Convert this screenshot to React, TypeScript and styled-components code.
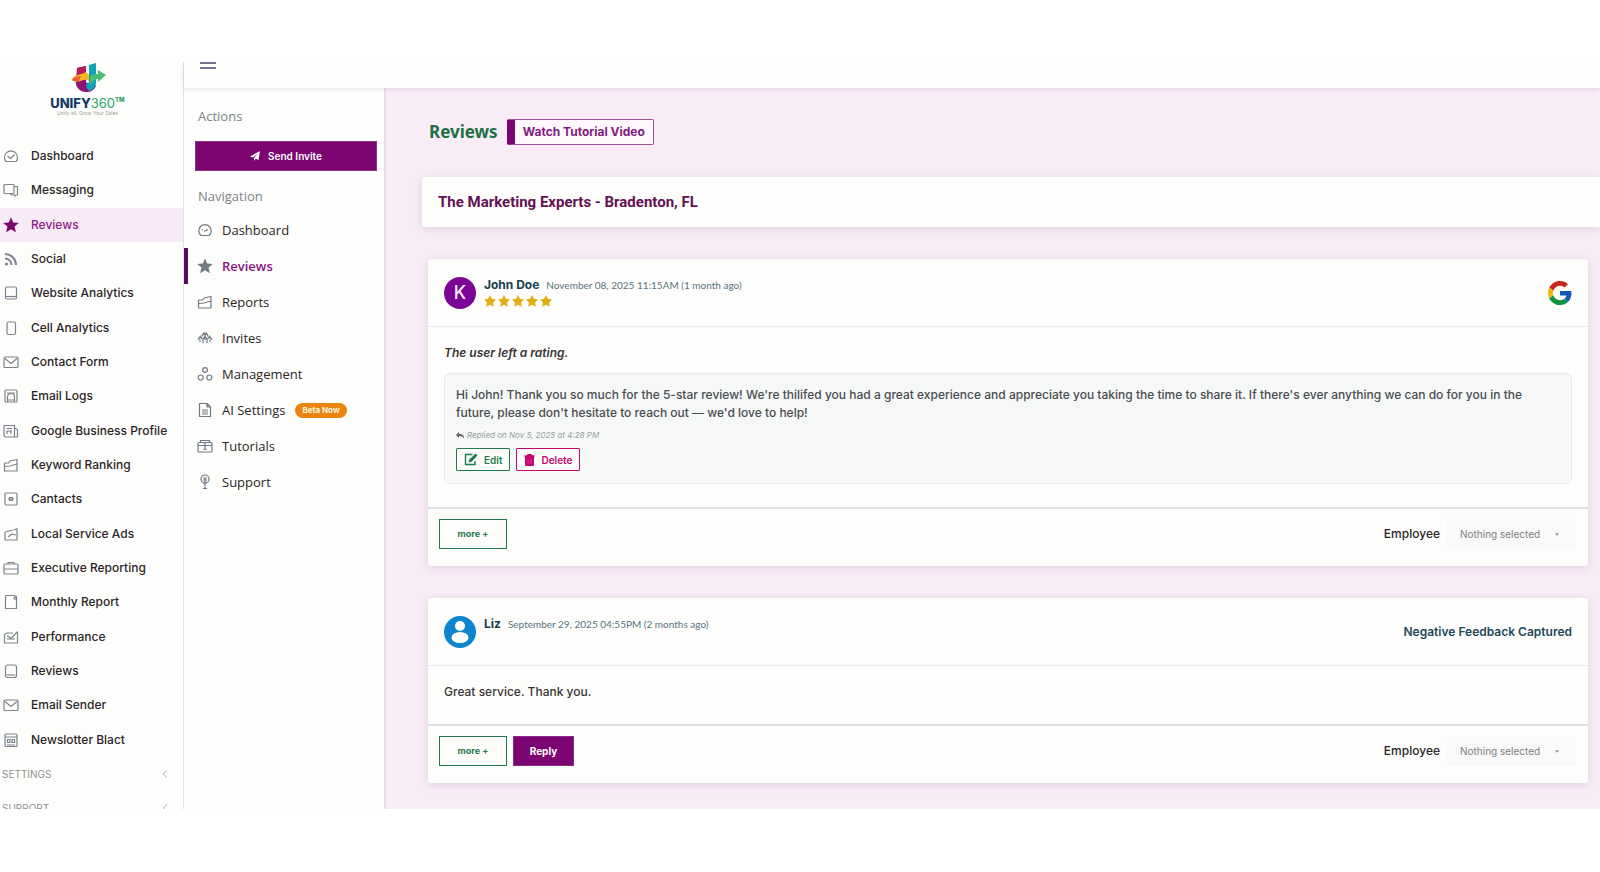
import React from "react";
import styled, { createGlobalStyle, css } from "styled-components";

const color = {
  paper: "#fdfefb",
  line: "#e3e2e6",
  wash: "#f8ecf6",
  purple: "#7b0472",
  green: "#1f7a4d",
  ink: "#2b2527",
  slate: "#21485a",
  muted: "#7b8488",
};
const sans = `Inter, "Liberation Sans", sans-serif`;
const noto = `"Noto Sans", "Open Sans", sans-serif`;
const open = `"Open Sans", "Noto Sans", sans-serif`;

const Global = createGlobalStyle`
  *, *::before, *::after { box-sizing: border-box; }
  body { margin: 0; background: #fff; font-family: ${sans}; color: ${color.ink}; }
  button, select { font-family: inherit; margin: 0; }
  a { color: inherit; text-decoration: none; }
  ul { list-style: none; margin: 0; padding: 0; }
  h1, h2, h3, p { margin: 0; }
`;

const Page = styled.div`
  height: 100vh;
  padding: 62px 0 63px;
`;
const Shell = styled.div`
  display: grid;
  grid-template-columns: 184px minmax(0, 1fr);
  height: 100%;
  overflow: hidden;
  background: ${color.paper};
`;

/* primary sidebar */
const Sidebar = styled.aside`
  display: flex;
  flex-direction: column;
  min-height: 0;
  border-right: 1px solid ${color.line};
`;
const Brand = styled.a`
  display: flex;
  flex-direction: column;
  align-items: center;
  height: 77px;
  flex: none;
  padding-right: 8px;
`;
const BrandName = styled.span`
  display: flex;
  font: 800 13px/14px ${sans};
  color: #143a6b;
`;
const BrandNumber = styled.span`
  font-weight: 400;
  color: #2fa36b;
`;
const BrandMark = styled.sup`
  font-size: 6px;
  line-height: 8px;
  color: #2fa36b;
`;
const BrandTag = styled.span`
  font: 400 5px/6px ${sans};
  color: #a59a92;
`;
const MainMenu = styled.ul`
  display: grid;
  grid-auto-rows: 1fr;
  flex: 1;
  min-height: 0;
`;
const MainLink = styled.a<{ $active?: boolean }>`
  display: grid;
  grid-template-columns: 16px 1fr;
  column-gap: 12px;
  align-items: center;
  height: 100%;
  padding-left: 3px;
  font: 500 12px/16px ${sans};
  white-space: nowrap;
  color: ${(p) => (p.$active ? "#8d1a86" : color.ink)};
  background: ${(p) => (p.$active ? "#f8eaf6" : "transparent")};
  svg { color: ${(p) => (p.$active ? color.purple : "#7d828c")}; }
`;
const MenuFooter = styled.div`
  height: 52px;
  flex: none;
  overflow: hidden;
`;
const GroupButton = styled.button`
  display: flex;
  align-items: center;
  justify-content: space-between;
  width: 100%;
  height: 34px;
  padding: 0 15px 0 2px;
  border: 0;
  background: none;
  font-size: 10px;
  line-height: 14px;
  color: #8d9191;
`;

/* right side */
const Stage = styled.div`
  display: flex;
  flex-direction: column;
  min-width: 0;
  min-height: 0;
`;
const TopBar = styled.header`
  position: relative;
  flex: none;
  height: 26px;
  padding-left: 16px;
  background: ${color.paper};
  box-shadow: 0 1px 5px rgba(90, 60, 100, 0.14);
`;
const MenuToggle = styled.button`
  display: block;
  height: 8px;
  padding: 0;
  border: 0;
  background: none;
  svg { display: block; }
`;
const Columns = styled.div`
  display: grid;
  grid-template-columns: 202px minmax(0, 1fr);
  flex: 1;
  min-height: 0;
`;
const SubNav = styled.nav`
  border-right: 2px solid #e6dfea;
  padding-top: 18px;
`;
const Caption = styled.h2`
  padding-left: 14px;
  font: 400 13px/20px ${open};
  color: ${color.muted};
`;
const InviteButton = styled.button`
  display: flex;
  align-items: center;
  justify-content: center;
  gap: 8px;
  width: calc(100% - 18px);
  height: 30px;
  margin: 15px 7px 15px 11px;
  border: 1px solid #93348c;
  background: ${color.purple};
  font: 600 10px/16px ${sans};
  color: #fff;
`;
const SubMenu = styled.ul`
  padding-top: 6px;
`;
const SubLink = styled.a<{ $active?: boolean }>`
  display: flex;
  align-items: center;
  height: 36px;
  padding-left: 9px;
  border-left: 4px solid ${(p) => (p.$active ? "#5b0a62" : "transparent")};
  font: 500 13px/18px ${open};
  color: ${(p) => (p.$active ? "#8a1283" : color.ink)};
  font-weight: ${(p) => (p.$active ? 600 : 500)};
  svg { margin-right: 9px; color: #727985; }
`;
const Pill = styled.span`
  margin-left: 10px;
  padding: 0 7px;
  border-radius: 8px;
  background: #e98510;
  font: 700 8px/15px ${sans};
  color: #fff3df;
`;

/* content */
const Content = styled.main`
  min-width: 0;
  padding: 31px 0 0 36px;
  overflow: hidden;
  background: ${color.wash};
`;
const Heading = styled.div`
  display: flex;
  align-items: center;
  gap: 9px;
  height: 26px;
  margin-left: 7px;
`;
const PageTitle = styled.h1`
  font: 700 17px/24px ${noto};
  color: #1f7045;
`;
const TutorialButton = styled.button`
  height: 26px;
  padding: 0 8px;
  border: 1px solid #9a4f98;
  border-left: 8px solid ${color.purple};
  border-radius: 2px;
  background: #fef8fd;
  font: 700 12px/16px ${sans};
  color: #7d1c7d;
`;
const Location = styled.h2`
  margin: 32px 0;
  padding: 13px 16px;
  border-radius: 3px 0 0 3px;
  background: ${color.paper};
  box-shadow: 0 2px 8px rgba(80, 60, 110, 0.15);
  font: 700 15px/24px Roboto, sans-serif;
  color: #641055;
`;
const Card = styled.article`
  margin: 0 12px 32px 6px;
  border-radius: 3px;
  background: ${color.paper};
  box-shadow: 0 2px 8px rgba(80, 60, 110, 0.15);
`;
const CardHead = styled.header`
  display: flex;
  gap: 8px;
  padding: 18px 16px 17px;
  border-bottom: 1px solid #ebebed;
`;
const Avatar = styled.span<{ $fill: string }>`
  display: grid;
  place-items: center;
  width: 32px;
  height: 32px;
  border-radius: 50%;
  background: ${(p) => p.$fill};
  font: 500 18px/32px ${sans};
  color: #fbeafd;
`;
const Who = styled.div`
  flex: 1;
`;
const NameLine = styled.div`
  display: flex;
  align-items: center;
  gap: 7px;
  height: 16px;
`;
const Name = styled.h3`
  font: 700 12px/16px ${sans};
  color: #17404f;
`;
const When = styled.time`
  font: 400 10px/16px Lato, ${sans};
  color: #587280;
`;
const Stars = styled.div`
  display: flex;
  gap: 2px;
  height: 16px;
  align-items: center;
`;
const Source = styled.div`
  display: flex;
  align-items: center;
  font: 600 12px/16px ${sans};
  color: ${color.slate};
`;
const CardBody = styled.div`
  padding: 17px 16px 23px;
`;
const Quote = styled.p<{ $italic?: boolean }>`
  font: ${(p) => (p.$italic ? "italic 600" : "500")} 12px/18px ${sans};
  color: #393437;
`;
const ReplyBox = styled.section`
  margin-top: 11px;
  padding: 12px 11px;
  border: 1px solid #e4e8ea;
  border-radius: 6px;
  background: #f5f8f7;
`;
const ReplyText = styled.p`
  font: 500 12px/18px ${sans};
  color: #4b4c50;
`;
const ReplyMeta = styled.p`
  display: flex;
  align-items: center;
  gap: 3px;
  margin: 5px 0;
  font: italic 400 8px/16px ${sans};
  color: #9a9ea2;
`;
const Row = styled.div`
  display: flex;
  gap: 6px;
`;
const SmallButton = styled.button<{ $tone: string }>`
  display: flex;
  align-items: center;
  gap: 6px;
  height: 23px;
  padding: 0 7px;
  border: 1px solid ${(p) => p.$tone};
  border-radius: 1px;
  background: ${color.paper};
  font: 600 10px/14px ${sans};
  color: ${(p) => p.$tone};
`;
const CardFoot = styled.footer`
  display: flex;
  align-items: center;
  justify-content: space-between;
  padding: 10px 12px 17px 11px;
  border-top: 2px solid #dfe0e0;
`;
const FootButton = styled.button<{ $solid?: boolean }>`
  height: 30px;
  min-width: ${(p) => (p.$solid ? 61 : 68)}px;
  padding: 0 14px;
  border: 1px solid ${color.green};
  background: ${color.paper};
  font: 700 9px/14px ${sans};
  color: ${color.green};
  ${(p) =>
    p.$solid &&
    css`
      border-color: #8b2b86;
      background: ${color.purple};
      font-size: 10px;
      color: #fff;
    `}
`;
const Assign = styled.label`
  display: flex;
  align-items: center;
  gap: 7px;
  font: 500 12px/16px ${sans};
`;
const Picker = styled.span`
  display: grid;
  align-items: center;
  > * { grid-area: 1 / 1; }
  svg { justify-self: end; margin-right: 17px; pointer-events: none; color: #8d9293; }
`;
const Select = styled.select`
  appearance: none;
  width: 129px;
  height: 30px;
  padding: 0 13px;
  border: 0;
  border-radius: 2px;
  background: #f8f9f8;
  font: 400 10px/14px ${sans};
  color: #7d8283;
`;

const icons: Record<string, React.ReactNode> = {
  face: <><path d="M3 13.500A6.500 6.500 0 1 1 13 13.500H3z" /><path d="M4.500 8l3 2.500 4-4" /></>,
  chat: <><rect x="1" y="2.500" width="10" height="9" rx="1" /><path d="M11 4.500h3.500v8.500h-6l-1.500-1.500M12 13v2" /></>,
  star: <path d="M8 .3l2.200 5.200 5.600.4-4.300 3.700 1.400 5.700L8 12.200l-4.900 3.100 1.400-5.700L.2 5.900l5.600-.4z" fill="currentColor" stroke="none" />,
  rss: <><circle cx="3.500" cy="13" r="1.600" fill="currentColor" stroke="none" /><path d="M2 7.500a6.500 6.500 0 0 1 6.500 6.500M2 3a11 11 0 0 1 11 11" strokeWidth="2" /></>,
  page: <><rect x="2.500" y="2" width="11" height="12" rx="1.500" /><path d="M3 11.500h10" /></>,
  phone: <rect x="4" y="2" width="8.500" height="12.500" rx="1.500" />,
  mail: <><rect x="1" y="3" width="14" height="10.500" rx="1" /><path d="M2 4.500l6 5 6-5" /></>,
  image: <><rect x="2" y="2" width="12" height="12" rx="1" /><path d="M4.500 14V9a3.500 3.500 0 0 1 7 0v5M4 5h8M4.500 12h7" /></>,
  news: <><path d="M1 2.500h10.500v11.500H2.500L1 12.500zM11.500 5l3 1.500V14h-3M3.500 5.500h5.500M3.500 8h5.500M4 11V8M8 11V8" /></>,
  chart: <path d="M1.500 14V6h4l1.500-2L14 2.500V14zM2 9.500l5-.5 7-2" />,
  contact: <><rect x="2" y="2" width="12" height="12" rx="1" /><path d="M5 8h6M6.500 6.500h3v3h-3z" /></>,
  ads: <><path d="M2 6l8-2M14 2.500V14H2V6" /><path d="M5 11l4-3 4 1M11 4l3-1.500" /></>,
  brief: <><rect x="1" y="4" width="14" height="10" rx="1" /><path d="M5 4V2.500h6V4M1 9h14" /></>,
  report: <><path d="M2.500 1.500h8l3 1v12h-11z" /><path d="M10.500 4.500l3-2.500M12 3v3" /></>,
  perf: <><path d="M1.500 5.500L4 4h6M14.500 2.500V14h-13V5.500M4 10h8" /><path d="M4 6.500l4 3 6-6.500" /></>,
  tablet: <><rect x="2.500" y="2" width="11" height="12.500" rx="2" /><path d="M4 12h8" /></>,
  grid: <><rect x="2" y="2" width="12" height="12.500" rx="1" /><path d="M2 5h12M4.500 7.500h2.500v3H4.500zM9 7.500h2.500v3H9zM4 13h8" /></>,
  gauge: <><path d="M4 13.500a6.200 6.200 0 1 1 8 0z" /><path d="M7 9.500l4-2M5 7.500l1 .5" /></>,
  invites: <path d="M1 9.500l2.500-2.500 2 2M15 9.500L12.500 7l-2 2M5 6.500l1.500-3.500h3l1.500 3.500M6 13V9.500L8 6l2 3.500V13M3 12V9.500M13 12V9.500M5.500 4.500h5M8 3v7M4 5.500L2 8M12 5.500L14 8" />,
  people: <><circle cx="8" cy="4" r="2.400" /><circle cx="3.700" cy="11.500" r="2.500" /><circle cx="12.300" cy="11.500" r="2.500" /></>,
  doc: <><path d="M2.500 1.500h7.500l3.500 3.500v9.500h-11zM10 1.500V5h3.500M5 8h6M5 10h6M5 12h6" /></>,
  box: <><rect x="1" y="4.500" width="14" height="9.500" rx="1" /><path d="M3.500 4.500V2.500h9v2M1 7.500h14M8 5v7M6.500 11.500h3" /></>,
  help: <><circle cx="8" cy="5" r="4" /><path d="M6 4h4M6 6h4M8 3.500V12M6.500 9h3M6 14.500h4M8 12.500v2" /></>,
};

function Icon({ name, size = 16 }: { name: string; size?: number }) {
  return (
    <svg width={size} height={size} viewBox="0 0 16 16" fill="none" stroke="currentColor" strokeWidth="1.200" strokeLinejoin="round" aria-hidden="true">
      {icons[name]}
    </svg>
  );
}

const mainMenu = [
  ["face", "Dashboard"], ["chat", "Messaging"], ["star", "Reviews"], ["rss", "Social"],
  ["page", "Website Analytics"], ["phone", "Cell Analytics"], ["mail", "Contact Form"],
  ["image", "Email Logs"], ["news", "Google Business Profile"], ["chart", "Keyword Ranking"],
  ["contact", "Cantacts"], ["ads", "Local Service Ads"], ["brief", "Executive Reporting"],
  ["report", "Monthly Report"], ["perf", "Performance"], ["tablet", "Reviews"],
  ["mail", "Email Sender"], ["grid", "Newslotter Blact"],
];
const subMenu = [
  ["gauge", "Dashboard"], ["star", "Reviews"], ["chart", "Reports"], ["invites", "Invites"],
  ["people", "Management"], ["doc", "AI Settings", "Beta Now"], ["box", "Tutorials"], ["help", "Support"],
];

function Logo() {
  return (
    <svg width="36" height="34" viewBox="0 0 36 34" aria-hidden="true">
      <path d="M7 6l9-2v15c0 3 4 3 4 0l6 5c-2 4-5 6-9 6-5 0-8-2-10-5-2-4-1-8 0-11z" fill="#8c1475" />
      <path d="M7 6l9-2v9L6 17z" fill="#b51a5c" />
      <path d="M19 3l7-2v19c0 5-3 8-7 9-2-2-3-4-3-7 2 0 3-1 3-3z" fill="#0fa3b5" />
      <path d="M2 18c1-5 7-5 12-7 2-1 4 0 5 2v6c-5-4-10 4-17-1z" fill="#f6b81f" />
      <path d="M2 18c2-3 5-4 9-4l-2 5c-3 0-5 1-7-1z" fill="#ee5b3a" />
      <path d="M20 14c3-2 5-2 8-2V8l8 5-8 7v-3c-3 0-6 2-8 6z" fill="#49bd74" />
    </svg>
  );
}

function GoogleMark() {
  return (
    <svg width="24" height="24" viewBox="0 0 48 48" role="img" aria-label="Google">
      <path fill="#c5281c" d="M24 9.500c3.540 0 6.710 1.220 9.210 3.600l6.850-6.850C35.900 2.380 30.470 0 24 0 14.620 0 6.510 5.380 2.560 13.220l7.980 6.190C12.430 13.720 17.740 9.500 24 9.500z" />
      <path fill="#1557b8" d="M46.980 24.550c0-1.570-.15-3.090-.38-4.550H24v9.020h12.940c-.58 2.960-2.260 5.480-4.780 7.180l7.730 6c4.510-4.180 7.090-10.360 7.090-17.650z" />
      <path fill="#f0b40a" d="M10.530 28.590c-.48-1.450-.76-2.990-.76-4.590s.27-3.140.76-4.590l-7.980-6.190C.92 16.460 0 20.120 0 24c0 3.880.92 7.540 2.560 10.780l7.970-6.190z" />
      <path fill="#109240" d="M24 48c6.480 0 11.930-2.130 15.890-5.810l-7.730-6c-2.150 1.450-4.920 2.300-8.160 2.300-6.260 0-11.570-4.220-13.470-9.910l-7.980 6.190C6.510 42.620 14.620 48 24 48z" />
    </svg>
  );
}

function EmployeePicker() {
  return (
    <Assign>
      Employee
      <Picker>
        <Select defaultValue="none">
          <option value="none">Nothing selected</option>
        </Select>
        <svg width="4" height="3" viewBox="0 0 5 3" aria-hidden="true"><path d="M0 0h5L2.500 3z" fill="currentColor" /></svg>
      </Picker>
    </Assign>
  );
}

export default function App() {
  return (
    <Page>
      <Global />
      <Shell>
        <Sidebar>
          <Brand href="#home">
            <Logo />
            <BrandName>UNIFY<BrandNumber>360</BrandNumber><BrandMark>TM</BrandMark></BrandName>
            <BrandTag>Unify all. Grow Your Sales</BrandTag>
          </Brand>
          <MainMenu>
            {mainMenu.map(([icon, label], i) => (
              <li key={i}>
                <MainLink href="#menu" $active={i === 2}><Icon name={icon} />{label}</MainLink>
              </li>
            ))}
          </MainMenu>
          <MenuFooter>
            {["SETTINGS", "SUPPORT"].map((group) => (
              <GroupButton key={group} type="button">
                {group}
                <svg width="6" height="8" viewBox="0 0 6 8" fill="none" stroke="#b4b7b8" aria-hidden="true"><path d="M5 0.500L1 4l4 3.500" /></svg>
              </GroupButton>
            ))}
          </MenuFooter>
        </Sidebar>

        <Stage>
          <TopBar>
            <MenuToggle type="button" aria-label="Toggle menu">
              <svg width="16" height="8" viewBox="0 0 16 8" stroke="#77728c" strokeWidth="2" aria-hidden="true"><path d="M0 1h16M0 6h16" /></svg>
            </MenuToggle>
          </TopBar>
          <Columns>
            <SubNav>
              <Caption>Actions</Caption>
              <InviteButton type="button">
                <svg width="10" height="10" viewBox="0 0 10 10" fill="currentColor" aria-hidden="true"><path d="M10 0L8.500 9 5.500 7.800 4 10V7L8 2.500 3 6.500 0 5.500z" /></svg>
                Send Invite
              </InviteButton>
              <Caption>Navigation</Caption>
              <SubMenu>
                {subMenu.map(([icon, label, badge], i) => (
                  <li key={label}>
                    <SubLink href="#section" $active={i === 1}>
                      <Icon name={icon} />
                      {label}
                      {badge && <Pill>{badge}</Pill>}
                    </SubLink>
                  </li>
                ))}
              </SubMenu>
            </SubNav>

            <Content>
              <Heading>
                <PageTitle>Reviews</PageTitle>
                <TutorialButton type="button">Watch Tutorial Video</TutorialButton>
              </Heading>
              <Location>The Marketing Experts - Bradenton, FL</Location>

              <Card>
                <CardHead>
                  <Avatar $fill="#7c0596">K</Avatar>
                  <Who>
                    <NameLine>
                      <Name>John Doe</Name>
                      <When>November 08, 2025 11:15AM (1 month ago)</When>
                    </NameLine>
                    <Stars role="img" aria-label="5 stars">
                      {[1, 2, 3, 4, 5].map((n) => (
                        <svg key={n} width="12" height="12" viewBox="1 1 14 14" fill="#e3ae14" aria-hidden="true">
                          <path d="M8 1l2.200 4.500 4.900.7-3.500 3.500.8 4.900L8 12.300l-4.400 2.300.8-4.900L.9 6.200l4.900-.7z" />
                        </svg>
                      ))}
                    </Stars>
                  </Who>
                  <Source><GoogleMark /></Source>
                </CardHead>
                <CardBody>
                  <Quote $italic>The user left a rating.</Quote>
                  <ReplyBox>
                    <ReplyText>
                      Hi John! Thank you so much for the 5-star review! We're thilifed you had a great experience and appreciate you taking the time to share it. If there's ever anything we can do for you in the future, please don't hesitate to reach out — we'd love to help!
                    </ReplyText>
                    <ReplyMeta>
                      <svg width="8" height="7" viewBox="0 0 8 7" fill="#5f5f66" aria-hidden="true"><path d="M3 0v2c4 0 5 1.500 5 4.500C7 5 6 4 3 4v2L0 3z" /></svg>
                      Replied on Nov 5, 2025 at 4:28 PM
                    </ReplyMeta>
                    <Row>
                      <SmallButton type="button" $tone={color.green}>
                        <svg width="14" height="13" viewBox="0 0 14 13" aria-hidden="true">
                          <path d="M8.500 1.500H1.500v10h9.500V8" fill="none" stroke="currentColor" strokeWidth="1.400" />
                          <path d="M11.500 0.500l2 2L7.500 8.700 4.500 9.500l.8-3z" fill="currentColor" />
                        </svg>
                        Edit
                      </SmallButton>
                      <SmallButton type="button" $tone="#c4086c">
                        <svg width="11" height="12" viewBox="0 0 11 12" fill="currentColor" aria-hidden="true">
                          <path d="M3.500 0h4l.5 1.200h2.500v2H.5v-2H3zM1 3h9v8q0 1-1 1H2q-1 0-1-1z" />
                          <path d="M4 5.500v4M7 5.500v4" stroke="#e25ca0" strokeWidth=".8" />
                        </svg>
                        Delete
                      </SmallButton>
                    </Row>
                  </ReplyBox>
                </CardBody>
                <CardFoot>
                  <FootButton type="button">more +</FootButton>
                  <EmployeePicker />
                </CardFoot>
              </Card>

              <Card>
                <CardHead>
                  <Avatar $fill="#0c86cf">
                    <svg width="20" height="24" viewBox="0 0 20 24" fill="#fff" aria-hidden="true">
                      <circle cx="10" cy="6" r="5" />
                      <ellipse cx="10" cy="17.500" rx="8.500" ry="5.500" />
                    </svg>
                  </Avatar>
                  <Who>
                    <NameLine>
                      <Name>Liz</Name>
                      <When>September 29, 2025 04:55PM (2 months ago)</When>
                    </NameLine>
                  </Who>
                  <Source>Negative Feedback Captured</Source>
                </CardHead>
                <CardBody>
                  <Quote>Great service. Thank you.</Quote>
                </CardBody>
                <CardFoot>
                  <Row>
                    <FootButton type="button">more +</FootButton>
                    <FootButton type="button" $solid>Reply</FootButton>
                  </Row>
                  <EmployeePicker />
                </CardFoot>
              </Card>
            </Content>
          </Columns>
        </Stage>
      </Shell>
    </Page>
  );
}
